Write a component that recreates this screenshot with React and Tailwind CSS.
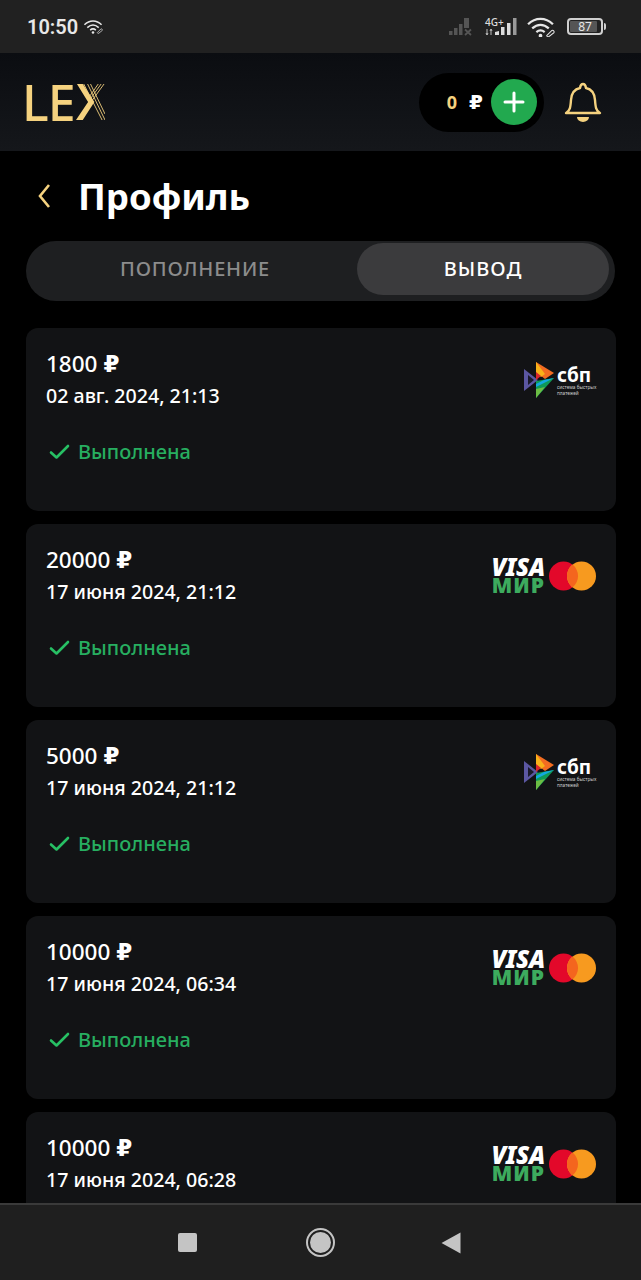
import React from "react";

const font = { fontFamily: '"Noto Sans", "Open Sans", "DejaVu Sans", sans-serif' };
const rubleFont = { fontFamily: '"DejaVu Sans", sans-serif' };

function Signal() {
  return (
    <svg width="26" height="20" viewBox="0 0 26 20" className="block">
      <rect x="0" y="14" width="3.500" height="4" fill="#555" />
      <rect x="5" y="11" width="3.500" height="7" fill="#555" />
      <rect x="10" y="7" width="3.500" height="11" fill="#555" />
      <rect x="15" y="1" width="5" height="10" fill="#555" />
      <path d="M16 12.500l6 5.500M22 12.500L16 18" stroke="#555" strokeWidth="1.800" />
    </svg>
  );
}

function Signal2() {
  return (
    <svg width="34" height="20" viewBox="0 0 34 20" className="block">
      <path d="M2 12v6M1 16l1 2 1-2M6 18v-6M5 14l1-2 1 2" stroke="#bbb" strokeWidth="1" fill="none" />
      <path d="M10 18v-3l4-1v4z" fill="#ddd" />
      <rect x="16" y="10" width="3.500" height="8" fill="#ddd" />
      <rect x="22" y="6" width="3.500" height="12" fill="#ddd" />
      <rect x="28" y="1" width="3.500" height="17" fill="#999" />
    </svg>
  );
}

function Wifi({ w = 24, color = "#e6e6e6" }) {
  return (
    <svg width={w} height={w * 0.75} viewBox="0 0 28 21" fill="none" stroke={color} className="block">
      <path d="M2 8C9 1 19 1 26 8" strokeWidth="2.200" />
      <path d="M6 12c5-4.500 11-4.500 16 0" strokeWidth="2.200" />
      <path d="M10 15.500c2.500-2 5.500-2 8 0" strokeWidth="2.200" />
      <circle cx="14" cy="19" r="1.800" fill={color} stroke="none" />
      <path d="M20 19l5-5a1.500 1.500 0 0 1 2 2l-5 4a1.500 1.500 0 0 1-2-1z" strokeWidth="1" />
    </svg>
  );
}

function Battery() {
  return (
    <div className="flex items-center">
      <div className="relative flex h-[17px] w-[36px] items-center justify-center overflow-hidden rounded-[4px] border-2 border-[#d0d0d0]">
        <div className="absolute inset-y-[1px] left-[1px] w-[27px] rounded-[1px] bg-[#555]" />
        <span className="relative text-[12px] leading-none text-[#e6e6e6]">87</span>
      </div>
      <div className="ml-[1px] h-[7px] w-[2px] rounded-r-sm bg-[#d0d0d0]" />
    </div>
  );
}

function LexLogo() {
  return (
    <div className="flex items-center text-[#f5d27f]">
      <span className="-ml-[3px] text-[50px] leading-none font-medium tracking-[-1px]">LE</span>
      <svg width="29" height="36" viewBox="0 0 30 36" fill="none" className="ml-[1px] block" preserveAspectRatio="none">
        <path d="M0 36L12.500 18 1 0h6l12 18L7 36z" fill="#f5d27f" />
        <path d="M29 0L17 16M26 0L15.500 14M23 0L14 12.500M12 0L30 36M15 0l15 30M8 0l19 36" stroke="#f5d27f" strokeWidth="0.900" />
      </svg>
    </div>
  );
}

function Bell() {
  return (
    <svg width="38" height="42" viewBox="0 0 38 42" fill="none" stroke="#f5d27f" strokeWidth="2.400" className="block">
      <path d="M2 32c4-2 4.500-6 5-13 .5-7 4-11 9-12 .3-2 1.300-4 3-4s2.700 2 3 4c5 1 8.500 5 9 12 .5 7 1 11 5 13z" strokeLinejoin="round" />
      <path d="M13 36h12a6 5 0 0 1-12 0z" fill="#f5d27f" stroke="none" />
    </svg>
  );
}

function Sbp() {
  return (
    <div className="flex w-[72px] items-center gap-[3px]">
      <svg width="30" height="36" viewBox="0 0 30 36" className="block shrink-0">
        <path d="M0 7l14 11L0 29z" fill="#5b57a2" />
        <path d="M4 13v10l6-5z" fill="#1a1a2a" />
        <path d="M12 0l18 11-9 6-9-7z" fill="#f26c21" />
        <path d="M12 0v11l5 4 4-3z" fill="#f8b219" />
        <path d="M12 10l5 4-5 4z" fill="#d9262c" />
        <path d="M12 19l18-3-18 20z" fill="#0f9a58" />
        <path d="M12 25l18-9-10 2-8 4z" fill="#13a8e0" />
        <path d="M12 27v9l9-11z" fill="#6cbd44" />
      </svg>
      <div className="flex flex-col pt-[3px]">
        <span className="text-[19px] leading-[17px] font-bold text-white">сбп</span>
        <span className="text-[4.700px] leading-[6px] whitespace-nowrap text-[#ccc]">система быстрых</span>
        <span className="text-[4.700px] leading-[6px] whitespace-nowrap text-[#ccc]">платежей</span>
      </div>
    </div>
  );
}

function Cards() {
  return (
    <div className="flex items-center gap-[4px]">
      <div className="flex w-[57px] flex-col items-end">
        <span className="text-[24px] leading-[20px] font-black tracking-[-0.200px] text-white italic">VISA</span>
        <span className="text-[21px] leading-[17px] font-black tracking-[1px] text-[#3dab5e]">МИР</span>
      </div>
      <svg width="47" height="30" viewBox="0 0 47 30" className="block">
        <circle cx="14.500" cy="15" r="14.500" fill="#e3082a" />
        <circle cx="32.500" cy="15" r="14.500" fill="#f79a1f" />
        <path d="M23.500 3.600a14.500 14.500 0 0 1 0 22.800 14.500 14.500 0 0 1 0-22.800z" fill="#f4651e" />
      </svg>
    </div>
  );
}

function Card({ amount, date, logo }) {
  return (
    <div className="flex h-[183px] shrink-0 justify-between rounded-[12px] bg-[#121315] pt-[20px] pr-[20px] pl-[20px]">
      <div className="flex flex-col">
        <span className="flex items-center gap-[6px] text-[22.500px] leading-[32px] font-medium text-white">
          {amount}
          <span className="text-[23px] font-bold" style={rubleFont}>₽</span>
        </span>
        <span className="text-[19.600px] leading-[32px] font-medium text-white">{date}</span>
        <div className="mt-[27px] flex items-center gap-[8px] pl-[3px] text-[#27ae60]">
          <svg width="21" height="16" viewBox="0 0 21 16" fill="none" stroke="#27c064" strokeWidth="2.600" strokeLinecap="round" strokeLinejoin="round" className="block">
            <path d="M2 8.500l5.500 5L19 2" />
          </svg>
          <span className="text-[20px] leading-[26px] font-medium">Выполнена</span>
        </div>
      </div>
      <div className={logo === "sbp" ? "pt-[14px]" : "pt-[13px]"}>
        {logo === "sbp" ? <Sbp /> : <Cards />}
      </div>
    </div>
  );
}

const items = [
  { amount: "1800", date: "02 авг. 2024, 21:13", logo: "sbp" },
  { amount: "20000", date: "17 июня 2024, 21:12", logo: "cards" },
  { amount: "5000", date: "17 июня 2024, 21:12", logo: "sbp" },
  { amount: "10000", date: "17 июня 2024, 06:34", logo: "cards" },
  { amount: "10000", date: "17 июня 2024, 06:28", logo: "cards" },
];

export default function App() {
  return (
    <div className="flex h-[1280px] w-[641px] flex-col overflow-hidden bg-black" style={font}>
      <div className="flex h-[53px] shrink-0 items-center justify-between bg-[#212121] pr-[35px] pl-[27px]">
        <div className="flex items-center gap-[5px]">
          <span className="text-[20px] leading-none font-semibold text-[#e8e8e8]" style={{ fontFamily: "Roboto, sans-serif" }}>10:50</span>
          <Wifi w={20} />
        </div>
        <div className="flex items-center">
          <Signal />
          <div className="relative ml-[10px] w-[34px]">
            <span className="absolute top-0 left-0 text-[10px] leading-none font-medium text-[#ddd]">4G+</span>
            <Signal2 />
          </div>
          <div className="ml-[7px]"><Wifi w={29} /></div>
          <div className="ml-[12px]"><Battery /></div>
        </div>
      </div>

      <div className="flex h-[98px] shrink-0 items-center justify-between bg-gradient-to-b from-[#0b0d11] to-[#15171b] pr-[39px] pl-[25px]">
        <LexLogo />
        <div className="flex items-center gap-[20px]">
          <div className="flex h-[59px] w-[125px] items-center justify-end rounded-full bg-black pr-[7px]">
            <span className="text-[18px] font-bold text-[#f5d27f]">0</span>
            <span className="mr-[8px] ml-[12px] text-[20px] font-bold text-white" style={rubleFont}>₽</span>
            <div className="flex h-[46px] w-[46px] items-center justify-center rounded-full bg-[#22a94f]">
              <svg width="22" height="22" viewBox="0 0 22 22" stroke="#fff" strokeWidth="3" strokeLinecap="round" className="block">
                <path d="M11 2v18M2 11h18" />
              </svg>
            </div>
          </div>
          <Bell />
        </div>
      </div>

      <div className="flex h-[90px] shrink-0 items-center bg-black pl-[37px]">
        <svg width="14" height="26" viewBox="0 0 14 26" fill="none" stroke="#f5d27f" strokeWidth="2.600" className="block">
          <path d="M12 2L3 13l9 11" />
        </svg>
        <h1 className="ml-[27px] text-[36.500px] leading-none font-bold text-white">Профиль</h1>
      </div>

      <div className="mx-[26px] flex h-[60px] shrink-0 rounded-full bg-[#1e1f21] pt-[2px] pr-[6px] pb-[6px]">
        <div className="flex flex-1 items-center justify-center pl-[7px] text-[20px] font-medium tracking-[0.800px] text-[#8c8c8c]">ПОПОЛНЕНИЕ</div>
        <div className="flex w-[252px] items-center justify-center rounded-full bg-[#3b3b3d] text-[20px] font-medium tracking-[1px] text-white">ВЫВОД</div>
      </div>

      <div className="mt-[27px] mr-[25px] ml-[26px] flex min-h-0 flex-1 flex-col gap-[13px] overflow-hidden">
        {items.map((it, i) => <Card key={i} {...it} />)}
      </div>

      <div className="flex h-[77px] shrink-0 items-center justify-center border-t-2 border-[#3a3a3a] bg-[#1f1f1f] pr-[2px]">
        <div className="h-[19px] w-[19px] rounded-[2px] bg-[#c4c4c4]" />
        <div className="ml-[109px] flex h-[29px] w-[29px] items-center justify-center rounded-full border-2 border-[#c4c4c4]">
          <div className="h-[21px] w-[21px] rounded-full bg-[#c4c4c4]" />
        </div>
        <svg width="20" height="22" viewBox="0 0 20 22" className="ml-[106px] block">
          <path d="M19.500 0.500v21L0.500 11z" fill="#c4c4c4" />
        </svg>
      </div>
    </div>
  );
}
